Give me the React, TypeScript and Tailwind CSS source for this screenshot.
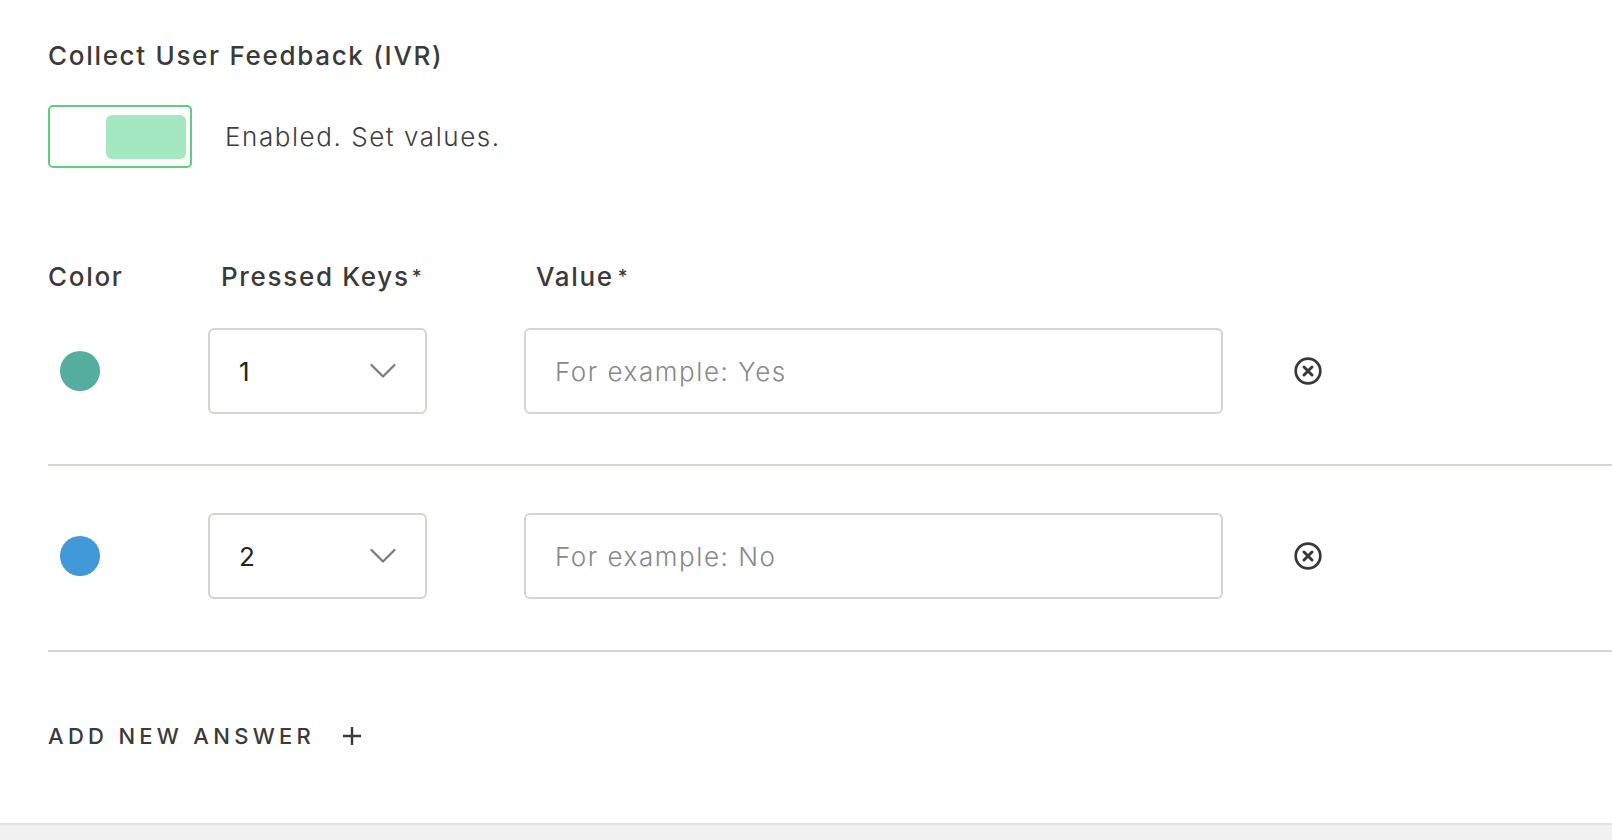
import React from "react";

const font = { fontFamily: "Inter, 'Open Sans', sans-serif" };

function Chevron() {
  return (
    <svg width="26" height="16" viewBox="0 0 26 16" fill="none">
      <polyline points="1.5,2 13,13.5 24.5,2" stroke="#7a7a7a" strokeWidth="2.2" strokeLinecap="round" strokeLinejoin="round" />
    </svg>
  );
}

function CloseIcon() {
  return (
    <svg width="28" height="28" viewBox="0 0 28 28" fill="none">
      <circle cx="14" cy="14" r="12.3" stroke="#383838" strokeWidth="2.7" />
      <path d="M10 10 L18 18 M18 10 L10 18" stroke="#383838" strokeWidth="3" strokeLinecap="round" />
    </svg>
  );
}

type Row = { color: string; key: string; placeholder: string; pt: string };

const rows: Row[] = [
  { color: "bg-[#54ad9d]", key: "1", placeholder: "For example: Yes", pt: "pt-[36px] pb-[50px]" },
  { color: "bg-[#4299d9]", key: "2", placeholder: "For example: No", pt: "pt-[47px] pb-[51px]" },
];

export default function App() {
  return (
    <div className="w-[1612px] h-[840px] bg-white flex flex-col overflow-hidden" style={font}>
      <div className="flex-1 pl-[48px]">
        <h2 className="pt-[41px] text-[26px] leading-[30px] font-medium text-[#3a3a3a] tracking-[0.065em]">
          Collect User Feedback (IVR)
        </h2>

        <div className="mt-[34px] flex items-center">
          <button className="w-[144px] h-[63px] border-2 border-[#5dcf7f] rounded-[5px] flex items-center justify-end pr-[4px] bg-white">
            <span className="block w-[80px] h-[44px] rounded-[6px] bg-[#a4e8c1]" />
          </button>
          <span className="ml-[33px] text-[26px] leading-[30px] font-light tracking-[0.06em] text-[#3d3d3d]">
            Enabled. Set values.
          </span>
        </div>

        <div className="mt-[94px] flex text-[26px] leading-[30px] font-medium tracking-[0.065em] text-[#3a3a3a]">
          <div className="w-[173px]">Color</div>
          <div className="w-[315px]">
            Pressed Keys<sup className="text-[19px] ml-[2px] relative top-[-3px]">*</sup>
          </div>
          <div>
            Value<sup className="text-[19px] ml-[4px] relative top-[-3px]">*</sup>
          </div>
        </div>

        {rows.map((r) => (
          <div key={r.key} className={`flex items-center border-b-2 border-[#d2d6ce] ${r.pt}`}>
            <div className="w-[160px] pl-[12px]">
              <span className={`block w-[40px] h-[40px] rounded-full ${r.color}`} />
            </div>
            <div className="w-[219px] h-[86px] border-2 border-[#d2d6ce] rounded-[6px] flex items-center justify-between pl-[29px] pr-[29px] text-[26px] font-normal text-[#222]">
              <span>{r.key}</span>
              <Chevron />
            </div>
            <input
              className="ml-[97px] w-[699px] h-[86px] border-2 border-[#d2d6ce] rounded-[6px] pl-[29px] text-[26px] font-light tracking-[0.06em] text-[#333] placeholder:text-[#888] outline-none"
              placeholder={r.placeholder}
            />
            <button className="ml-[71px] w-[28px] h-[28px] flex items-center justify-center">
              <CloseIcon />
            </button>
          </div>
        ))}

        <button className="mt-[69px] flex items-center text-[22px] leading-[30px] font-medium tracking-[0.195em] text-[#3a3a3a]">
          ADD NEW ANSWER
          <svg className="ml-[27px]" width="20" height="20" viewBox="0 0 20 20">
            <path d="M10 1 V19 M1 10 H19" stroke="#3a3a3a" strokeWidth="2.4" />
          </svg>
        </button>
      </div>
      <div className="h-[17px] border-t-2 border-[#e0e0e0] bg-[#f1f1f1]" />
    </div>
  );
}
